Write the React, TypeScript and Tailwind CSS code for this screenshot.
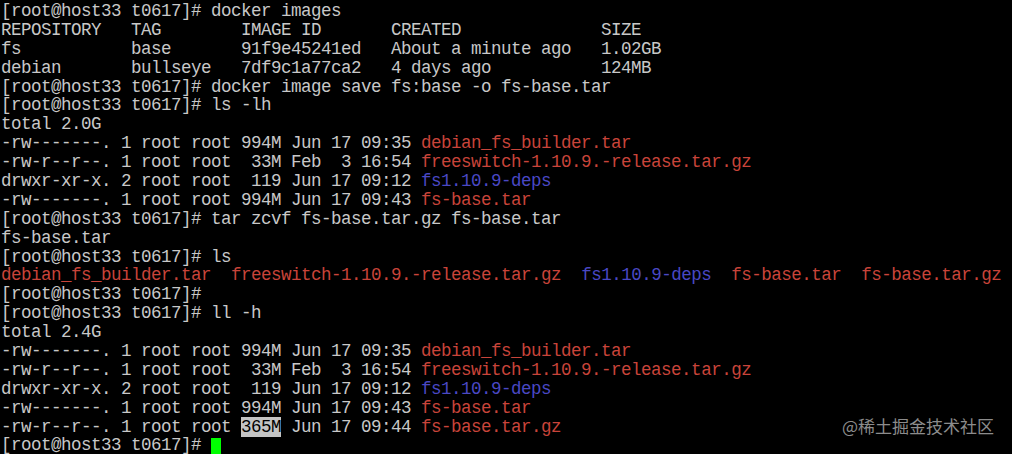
import React from 'react'

type Seg = { t: string; c?: 'red' | 'blue' | 'hl' | 'cursor' }

const P = '[root@host33 t0617]# '

const RED = 'text-[#c9443a]'
const BLUE = 'text-[#4a48c4]'

const LINES: Seg[][] = [
  [{ t: P + 'docker images' }],
  [{ t: 'REPOSITORY   TAG        IMAGE ID       CREATED              SIZE' }],
  [{ t: 'fs           base       91f9e45241ed   About a minute ago   1.02GB' }],
  [{ t: 'debian       bullseye   7df9c1a77ca2   4 days ago           124MB' }],
  [{ t: P + 'docker image save fs:base -o fs-base.tar' }],
  [{ t: P + 'ls -lh' }],
  [{ t: 'total 2.0G' }],
  [{ t: '-rw-------. 1 root root 994M Jun 17 09:35 ' }, { t: 'debian_fs_builder.tar', c: 'red' }],
  [{ t: '-rw-r--r--. 1 root root  33M Feb  3 16:54 ' }, { t: 'freeswitch-1.10.9.-release.tar.gz', c: 'red' }],
  [{ t: 'drwxr-xr-x. 2 root root  119 Jun 17 09:12 ' }, { t: 'fs1.10.9-deps', c: 'blue' }],
  [{ t: '-rw-------. 1 root root 994M Jun 17 09:43 ' }, { t: 'fs-base.tar', c: 'red' }],
  [{ t: P + 'tar zcvf fs-base.tar.gz fs-base.tar' }],
  [{ t: 'fs-base.tar' }],
  [{ t: P + 'ls' }],
  [
    { t: 'debian_fs_builder.tar', c: 'red' },
    { t: '  ' },
    { t: 'freeswitch-1.10.9.-release.tar.gz', c: 'red' },
    { t: '  ' },
    { t: 'fs1.10.9-deps', c: 'blue' },
    { t: '  ' },
    { t: 'fs-base.tar', c: 'red' },
    { t: '  ' },
    { t: 'fs-base.tar.gz', c: 'red' },
  ],
  [{ t: P.trimEnd() }],
  [{ t: P + 'll -h' }],
  [{ t: 'total 2.4G' }],
  [{ t: '-rw-------. 1 root root 994M Jun 17 09:35 ' }, { t: 'debian_fs_builder.tar', c: 'red' }],
  [{ t: '-rw-r--r--. 1 root root  33M Feb  3 16:54 ' }, { t: 'freeswitch-1.10.9.-release.tar.gz', c: 'red' }],
  [{ t: 'drwxr-xr-x. 2 root root  119 Jun 17 09:12 ' }, { t: 'fs1.10.9-deps', c: 'blue' }],
  [{ t: '-rw-------. 1 root root 994M Jun 17 09:43 ' }, { t: 'fs-base.tar', c: 'red' }],
  [
    { t: '-rw-r--r--. 1 root root ' },
    { t: '365M', c: 'hl' },
    { t: ' Jun 17 09:44 ' },
    { t: 'fs-base.tar.gz', c: 'red' },
  ],
  [{ t: P }, { t: ' ', c: 'cursor' }],
]

function Segment({ s }: { s: Seg }) {
  if (s.c === 'red') return <span className={RED}>{s.t}</span>
  if (s.c === 'blue') return <span className={BLUE}>{s.t}</span>
  if (s.c === 'hl') return <span className="bg-[#c4c4c4] text-black">{s.t}</span>
  if (s.c === 'cursor')
    return <span className="inline-block w-[10px] h-[16px] bg-[#00ff00] align-[-4px]" />
  return <span>{s.t}</span>
}

export default function App() {
  return (
    <div className="relative w-[1012px] h-[454px] overflow-hidden bg-black">
      <div
        className="flex flex-col pl-px pt-[2px] text-[17.5px] tracking-[-0.5px] leading-[18.9px] text-[#c8c8c8] whitespace-pre"
        style={{ fontFamily: '"Liberation Mono", monospace' }}
      >
        {LINES.map((line, i) => (
          <div key={i} className="h-[18.9px]">
            {line.map((s, j) => (
              <Segment key={j} s={s} />
            ))}
          </div>
        ))}
      </div>

      {/* watermark */}
      <div
        className="absolute right-[18px] top-[413px] text-[17px] text-[#8c8c8c]"
        style={{ fontFamily: '"Noto Sans CJK SC", sans-serif' }}
      >
        @稀土掘金技术社区
      </div>
    </div>
  )
}
